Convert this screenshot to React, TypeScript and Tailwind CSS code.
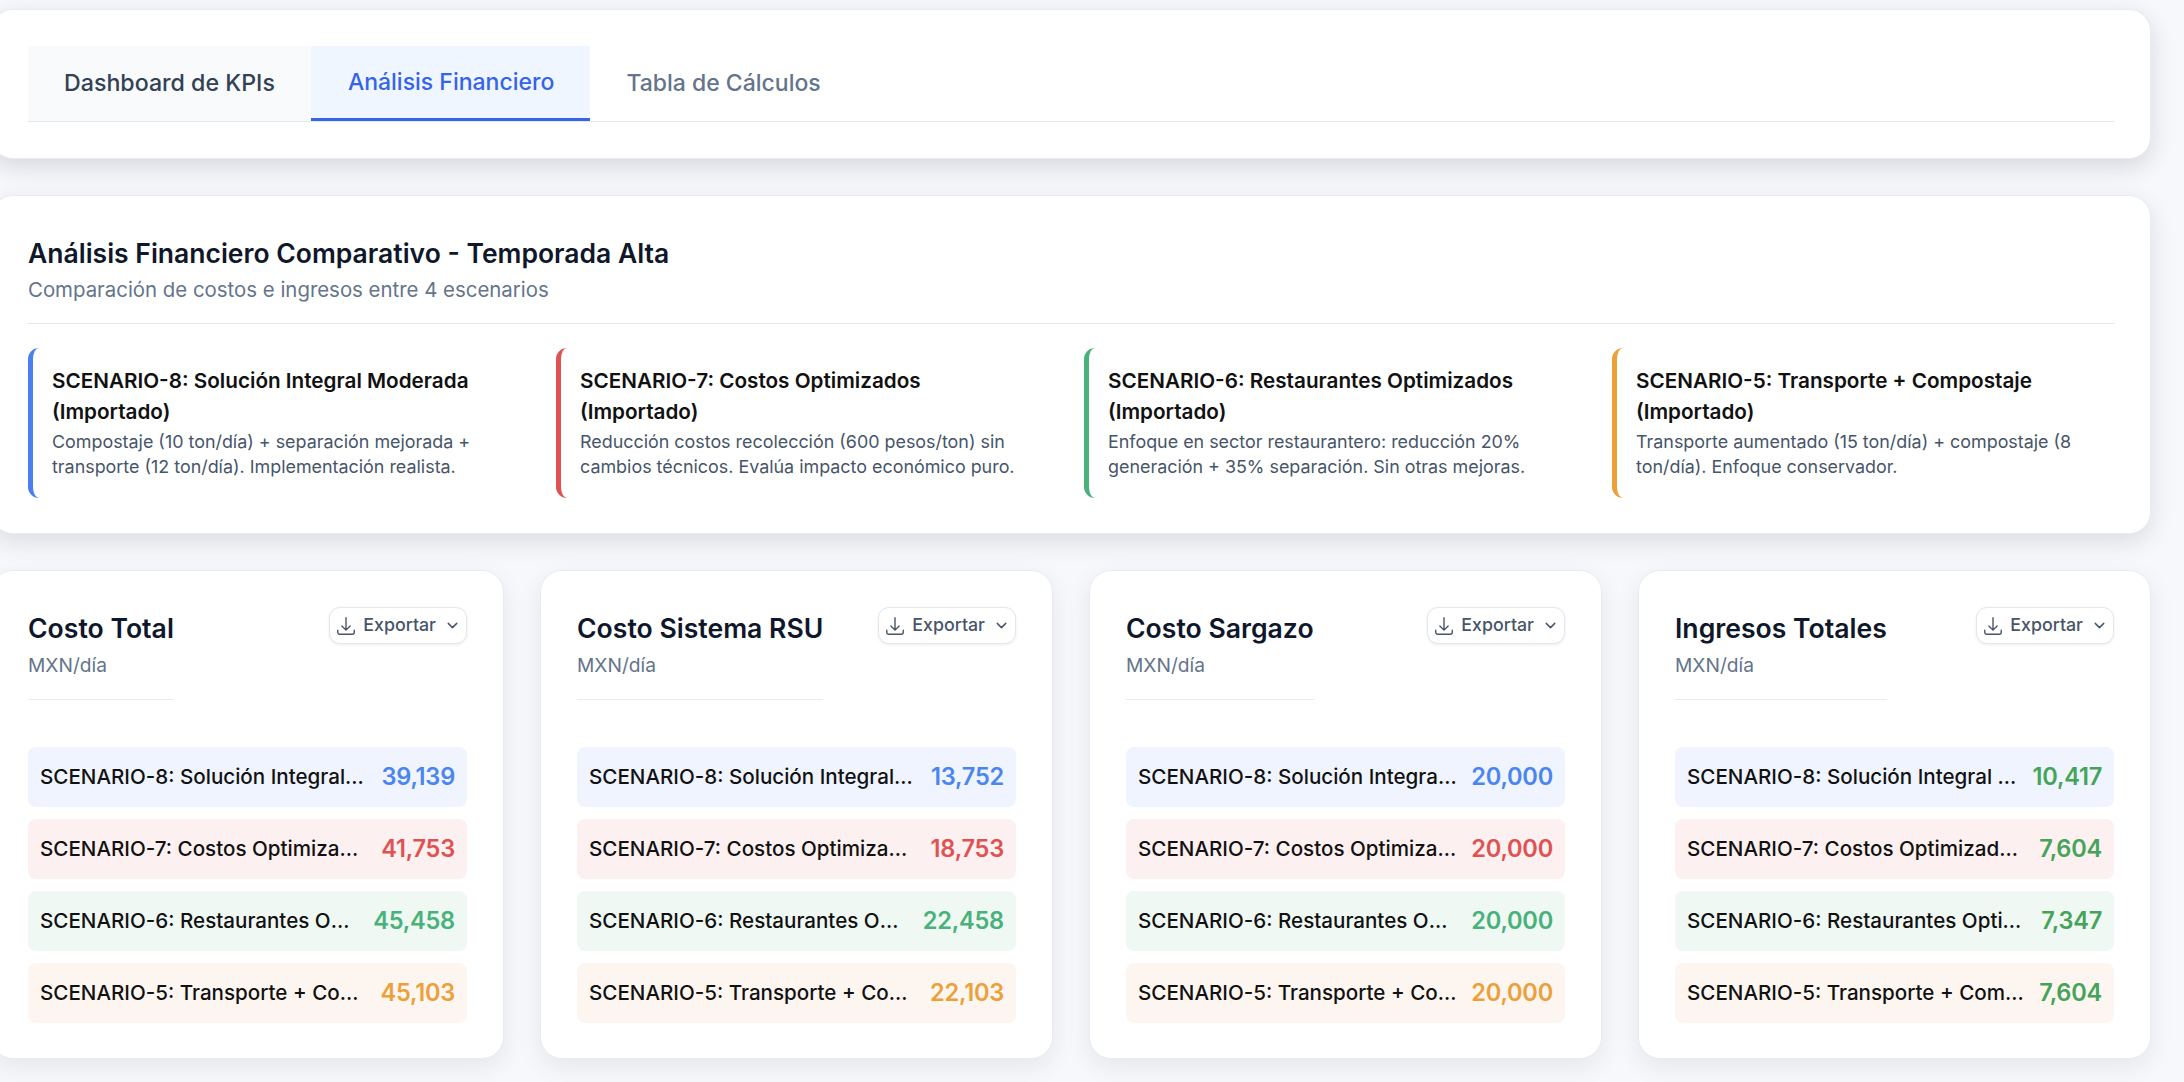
import { ChevronDown } from "lucide-react";
import { HiOutlineArrowDownTray } from "react-icons/hi2";

const scenarios = [
  {
    title: "SCENARIO-8: Solución Integral Moderada (Importado)",
    text: "Compostaje (10 ton/día) + separación mejorada + transporte (12 ton/día). Implementación realista.",
    border: "border-[#4a7fee]",
  },
  {
    title: "SCENARIO-7: Costos Optimizados (Importado)",
    text: "Reducción costos recolección (600 pesos/ton) sin cambios técnicos. Evalúa impacto económico puro.",
    border: "border-[#e05252]",
  },
  {
    title: "SCENARIO-6: Restaurantes Optimizados (Importado)",
    text: "Enfoque en sector restaurantero: reducción 20% generación + 35% separación. Sin otras mejoras.",
    border: "border-[#48b27a]",
  },
  {
    title: "SCENARIO-5: Transporte + Compostaje (Importado)",
    text: "Transporte aumentado (15 ton/día) + compostaje (8 ton/día). Enfoque conservador.",
    border: "border-[#eda03a]",
  },
];

const rowStyles = [
  { bg: "bg-[#f0f4ff]", color: "text-[#4a85f0]" },
  { bg: "bg-[#fcf0f0]", color: "text-[#e05252]" },
  { bg: "bg-[#f0f8f4]", color: "text-[#48b27a]" },
  { bg: "bg-[#fdf6f0]", color: "text-[#eda03a]" },
];

const metrics = [
  { title: "Costo Total", values: ["39,139", "41,753", "45,458", "45,103"] },
  { title: "Costo Sistema RSU", values: ["13,752", "18,753", "22,458", "22,103"] },
  { title: "Costo Sargazo", values: ["20,000", "20,000", "20,000", "20,000"] },
  { title: "Ingresos Totales", values: ["10,417", "7,604", "7,347", "7,604"], color: "text-[#46a35a]" },
];

function ExportButton() {
  return (
    <button className="mt-[1px] flex h-[37px] shrink-0 items-center gap-[6px] rounded-[11px] border border-[#e2e8f0] bg-white pl-[5px] pr-[5px] text-[17.8px] font-medium text-[#475569] shadow-[0_1px_3px_rgba(15,23,42,0.08)]">
      <HiOutlineArrowDownTray size={22} />
      <span>Exportar</span>
      <ChevronDown size={17} className="ml-[2px]" />
    </button>
  );
}

function MetricCard({ title, values, color }: { title: string; values: string[]; color?: string }) {
  return (
    <div className="h-[489px] rounded-[22px] border border-[#e8ecf2] bg-white px-[36px] pt-[35px] shadow-[0_8px_24px_rgba(15,23,42,0.08)]">
      <div className="flex items-start justify-between">
        <div className="border-b border-[#e8ecf2] pb-[16px] pt-[3px]">
          <div className="text-[26.6px] leading-[38px] font-semibold text-[#0f172a]">{title}</div>
          <div className="pt-[1px] text-[19.2px] leading-[35px] text-[#64748b]">MXN/día</div>
        </div>
        <ExportButton />
      </div>
      <div className="mt-[47px] flex flex-col gap-[12px]">
        {values.map((value, i) => (
          <div
            key={i}
            className={`flex h-[60px] items-center justify-between gap-[13px] rounded-[8px] px-[12px] ${rowStyles[i].bg}`}
          >
            <span className="min-w-0 truncate text-[20.6px] font-medium text-[#111111]">
              {scenarios[i].title}
            </span>
            <span className={`shrink-0 text-[23.6px] font-semibold tracking-[-0.01em] ${color ?? rowStyles[i].color}`}>{value}</span>
          </div>
        ))}
      </div>
    </div>
  );
}

export default function App() {
  return (
    <div className="min-h-[1082px] overflow-hidden bg-[#f7f8fb] font-['Inter',sans-serif]">
      <div className="-ml-[9px] flex w-[2160px] flex-col gap-[36px] pt-[9px]">
        <div className="h-[150px] rounded-[22px] border border-[#e8ecf2] bg-white px-[36px] pt-[36px] shadow-[0_8px_24px_rgba(15,23,42,0.14)]">
          <div className="flex h-[76px] border-b-[1.5px] border-[#e2e8f0] text-[23px] font-medium">
            <div className="flex items-center bg-[#f8fafc] px-[36px] text-[23.2px] text-[#334155]">Dashboard de KPIs</div>
            <div className="flex items-center border-b-[3px] border-[#3563e9] bg-[#eff6ff] pl-[37px] pr-[36px] text-[#3563e9]">
              Análisis Financiero
            </div>
            <div className="flex items-center px-[36px] text-[#64748b]">Tabla de Cálculos</div>
          </div>
        </div>

        <div className="h-[339px] rounded-[22px] border border-[#e8ecf2] bg-white px-[36px] pt-[39px] shadow-[0_8px_24px_rgba(15,23,42,0.12)]">
          <div className="border-b border-[#e2e8f0] pb-[15px]">
            <div className="text-[26.5px] leading-[36px] font-semibold text-[#0f172a]">
              Análisis Financiero Comparativo - Temporada Alta
            </div>
            <div className="pt-[1px] text-[20.4px] leading-[36px] text-[#64748b]">
              Comparación de costos e ingresos entre 4 escenarios
            </div>
          </div>
          <div className="mt-[24px] grid grid-cols-4 gap-[26px]">
            {scenarios.map((s) => (
              <div key={s.title} className={`h-[150px] rounded-[11px] border-l-[5px] pl-[19px] pr-[16px] pt-[17px] ${s.border}`}>
                <div className="text-[20.7px] leading-[31px] font-semibold text-[#111111]">{s.title}</div>
                <div className="mt-[3px] text-[17.9px] leading-[24.5px] text-[#475569]">{s.text}</div>
              </div>
            ))}
          </div>
        </div>

        <div className="grid grid-cols-4 gap-[36px]">
          {metrics.map((m) => (
            <MetricCard key={m.title} title={m.title} values={m.values} color={m.color} />
          ))}
        </div>
      </div>
    </div>
  );
}
